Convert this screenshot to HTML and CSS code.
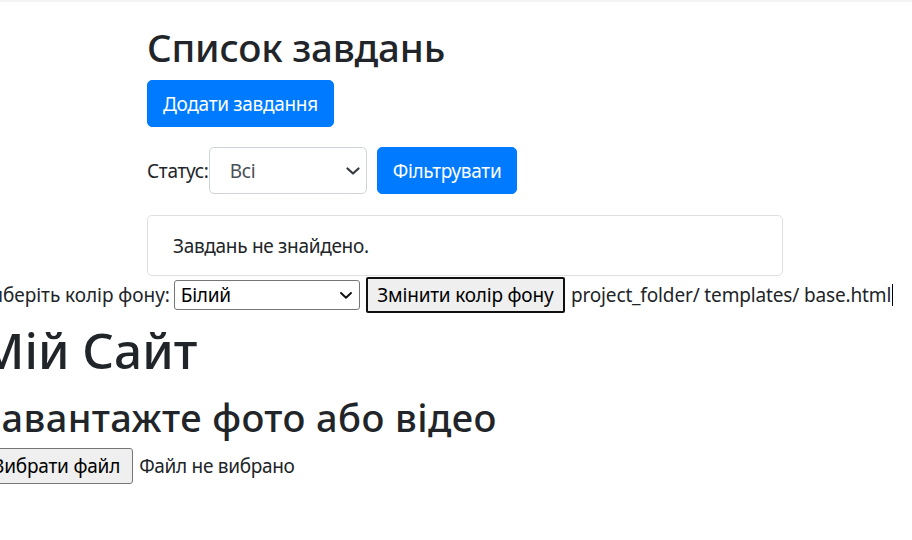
FILE: index.html
```html
<!DOCTYPE html>
<html lang="uk">
<head>
<meta charset="utf-8">
<title>Список завдань</title>
<link rel="stylesheet" href="styles.css">
</head>
<body>
<div class="topbar"></div>
<main class="container">
  <h1 class="title">Список завдань</h1>
  <a class="btn btn-primary" href="#">Додати завдання</a>
  <form class="filter">
    <label class="filter-label">Статус:</label>
    <div class="bs-select">
      <span>Всі</span>
      <svg class="chev" width="14" height="8" viewBox="0 0 14 8"><path d="M1.5 1.5 7 6.5 12.5 1.5" fill="none" stroke="#343a40" stroke-width="2.2" stroke-linecap="round" stroke-linejoin="round"/></svg>
    </div>
    <button type="button" class="btn btn-primary">Фільтрувати</button>
  </form>
  <div class="card">
    <p class="card-text">Завдань не знайдено.</p>
  </div>
</main>
<section class="page">
  <div class="color-row">
    <label class="color-label">Виберіть колір фону:</label>
    <div class="native-select">
      <span>Білий</span>
      <svg width="12" height="7" viewBox="0 0 12 7"><path d="M1 1 6 5.8 11 1" fill="none" stroke="#111" stroke-width="1.9" stroke-linecap="round" stroke-linejoin="round"/></svg>
    </div>
    <button type="button" class="native-btn focused">Змінити колір фону</button>
    <span class="path-text">project_folder/ templates/ base.html</span><span class="caret"></span>
  </div>
  <h1 class="site-title">Мій Сайт</h1>
  <h2 class="upload-title">Завантажте фото або відео</h2>
  <div class="file-row">
    <button type="button" class="native-btn file-btn">Вибрати файл</button>
    <span class="file-status">Файл не вибрано</span>
  </div>
</section>
</body>
</html>
```

FILE: styles.css
```css
* { box-sizing: border-box; }
html, body {
  margin: 0;
  padding: 0;
  background: #fff;
}
body {
  font-family: "Noto Sans", "Open Sans", sans-serif;
  font-size: 19px;
  letter-spacing: -0.3px;
  line-height: 30px;
  color: #212529;
  overflow: hidden;
}
.topbar {
  height: 2px;
  background: #f4f4f4;
}
.container {
  margin-left: 147px;
  width: 636px;
  padding-top: 22px;
}
.title {
  margin: 0 0 10px;
  font-size: 38.5px;
  line-height: 46px;
  font-weight: 500;
  letter-spacing: -0.2px;
}
.btn {
  display: inline-block;
  border: 1px solid transparent;
  border-radius: 5px;
  padding: 7.5px 15px;
  font-family: inherit;
  font-size: 19px;
  letter-spacing: -0.3px;
  line-height: 30px;
  text-decoration: none;
  cursor: pointer;
}
.btn-primary {
  background: #007bff;
  border-color: #007bff;
  color: #fff;
}
.filter {
  display: flex;
  align-items: center;
  margin-top: 20px;
}
.bs-select {
  display: flex;
  align-items: center;
  justify-content: space-between;
  width: 158px;
  height: 47px;
  border: 1px solid #ced4da;
  border-radius: 5px;
  padding: 0 6px 0 20px;
  color: #495057;
  margin-right: 10px;
}
.card {
  margin-top: 21px;
  border: 1px solid rgba(0, 0, 0, 0.125);
  border-radius: 5px;
  padding: 14.5px 25px;
}
.card-text {
  margin: 0;
}
.page {
  margin-left: -21px;
}
.color-row {
  display: flex;
  align-items: center;
  margin-top: 1px;
  height: 36px;
  white-space: nowrap;
}
.color-label {
  margin-right: 4px;
  letter-spacing: -0.05px;
}
.native-select {
  display: flex;
  align-items: center;
  justify-content: space-between;
  width: 186px;
  height: 30px;
  border: 1px solid #767676;
  border-radius: 3px;
  padding: 0 7px 0 6px;
  color: #000;
  margin-right: 6px;
}
.native-btn {
  font-family: inherit;
  font-size: 19px;
  letter-spacing: -0.2px;
  line-height: 24px;
  color: #000;
  background: #efefef;
  border: 1px solid #767676;
  border-radius: 3px;
  padding: 5px 8px;
  height: 36px;
}
.native-btn.focused {
  border: 2px solid #101010;
  border-radius: 2px;
  padding: 4px 9.5px;
}
.path-text {
  margin-left: 6px;
  letter-spacing: -0.15px;
}
.caret {
  display: inline-block;
  width: 1px;
  height: 22px;
  background: #000;
  margin-left: 1px;
}
.site-title {
  margin: 9px 0 18px;
  font-size: 49.5px;
  line-height: 57px;
  font-weight: 500;
  letter-spacing: 0;
}
.upload-title {
  margin: 0 0 11px;
  font-size: 38px;
  line-height: 40px;
  font-weight: 500;
  letter-spacing: 0.4px;
}
.file-row {
  display: flex;
  align-items: center;
}
.file-btn {
  padding: 5px 12px;
}
.file-status {
  margin-left: 6px;
}
```
